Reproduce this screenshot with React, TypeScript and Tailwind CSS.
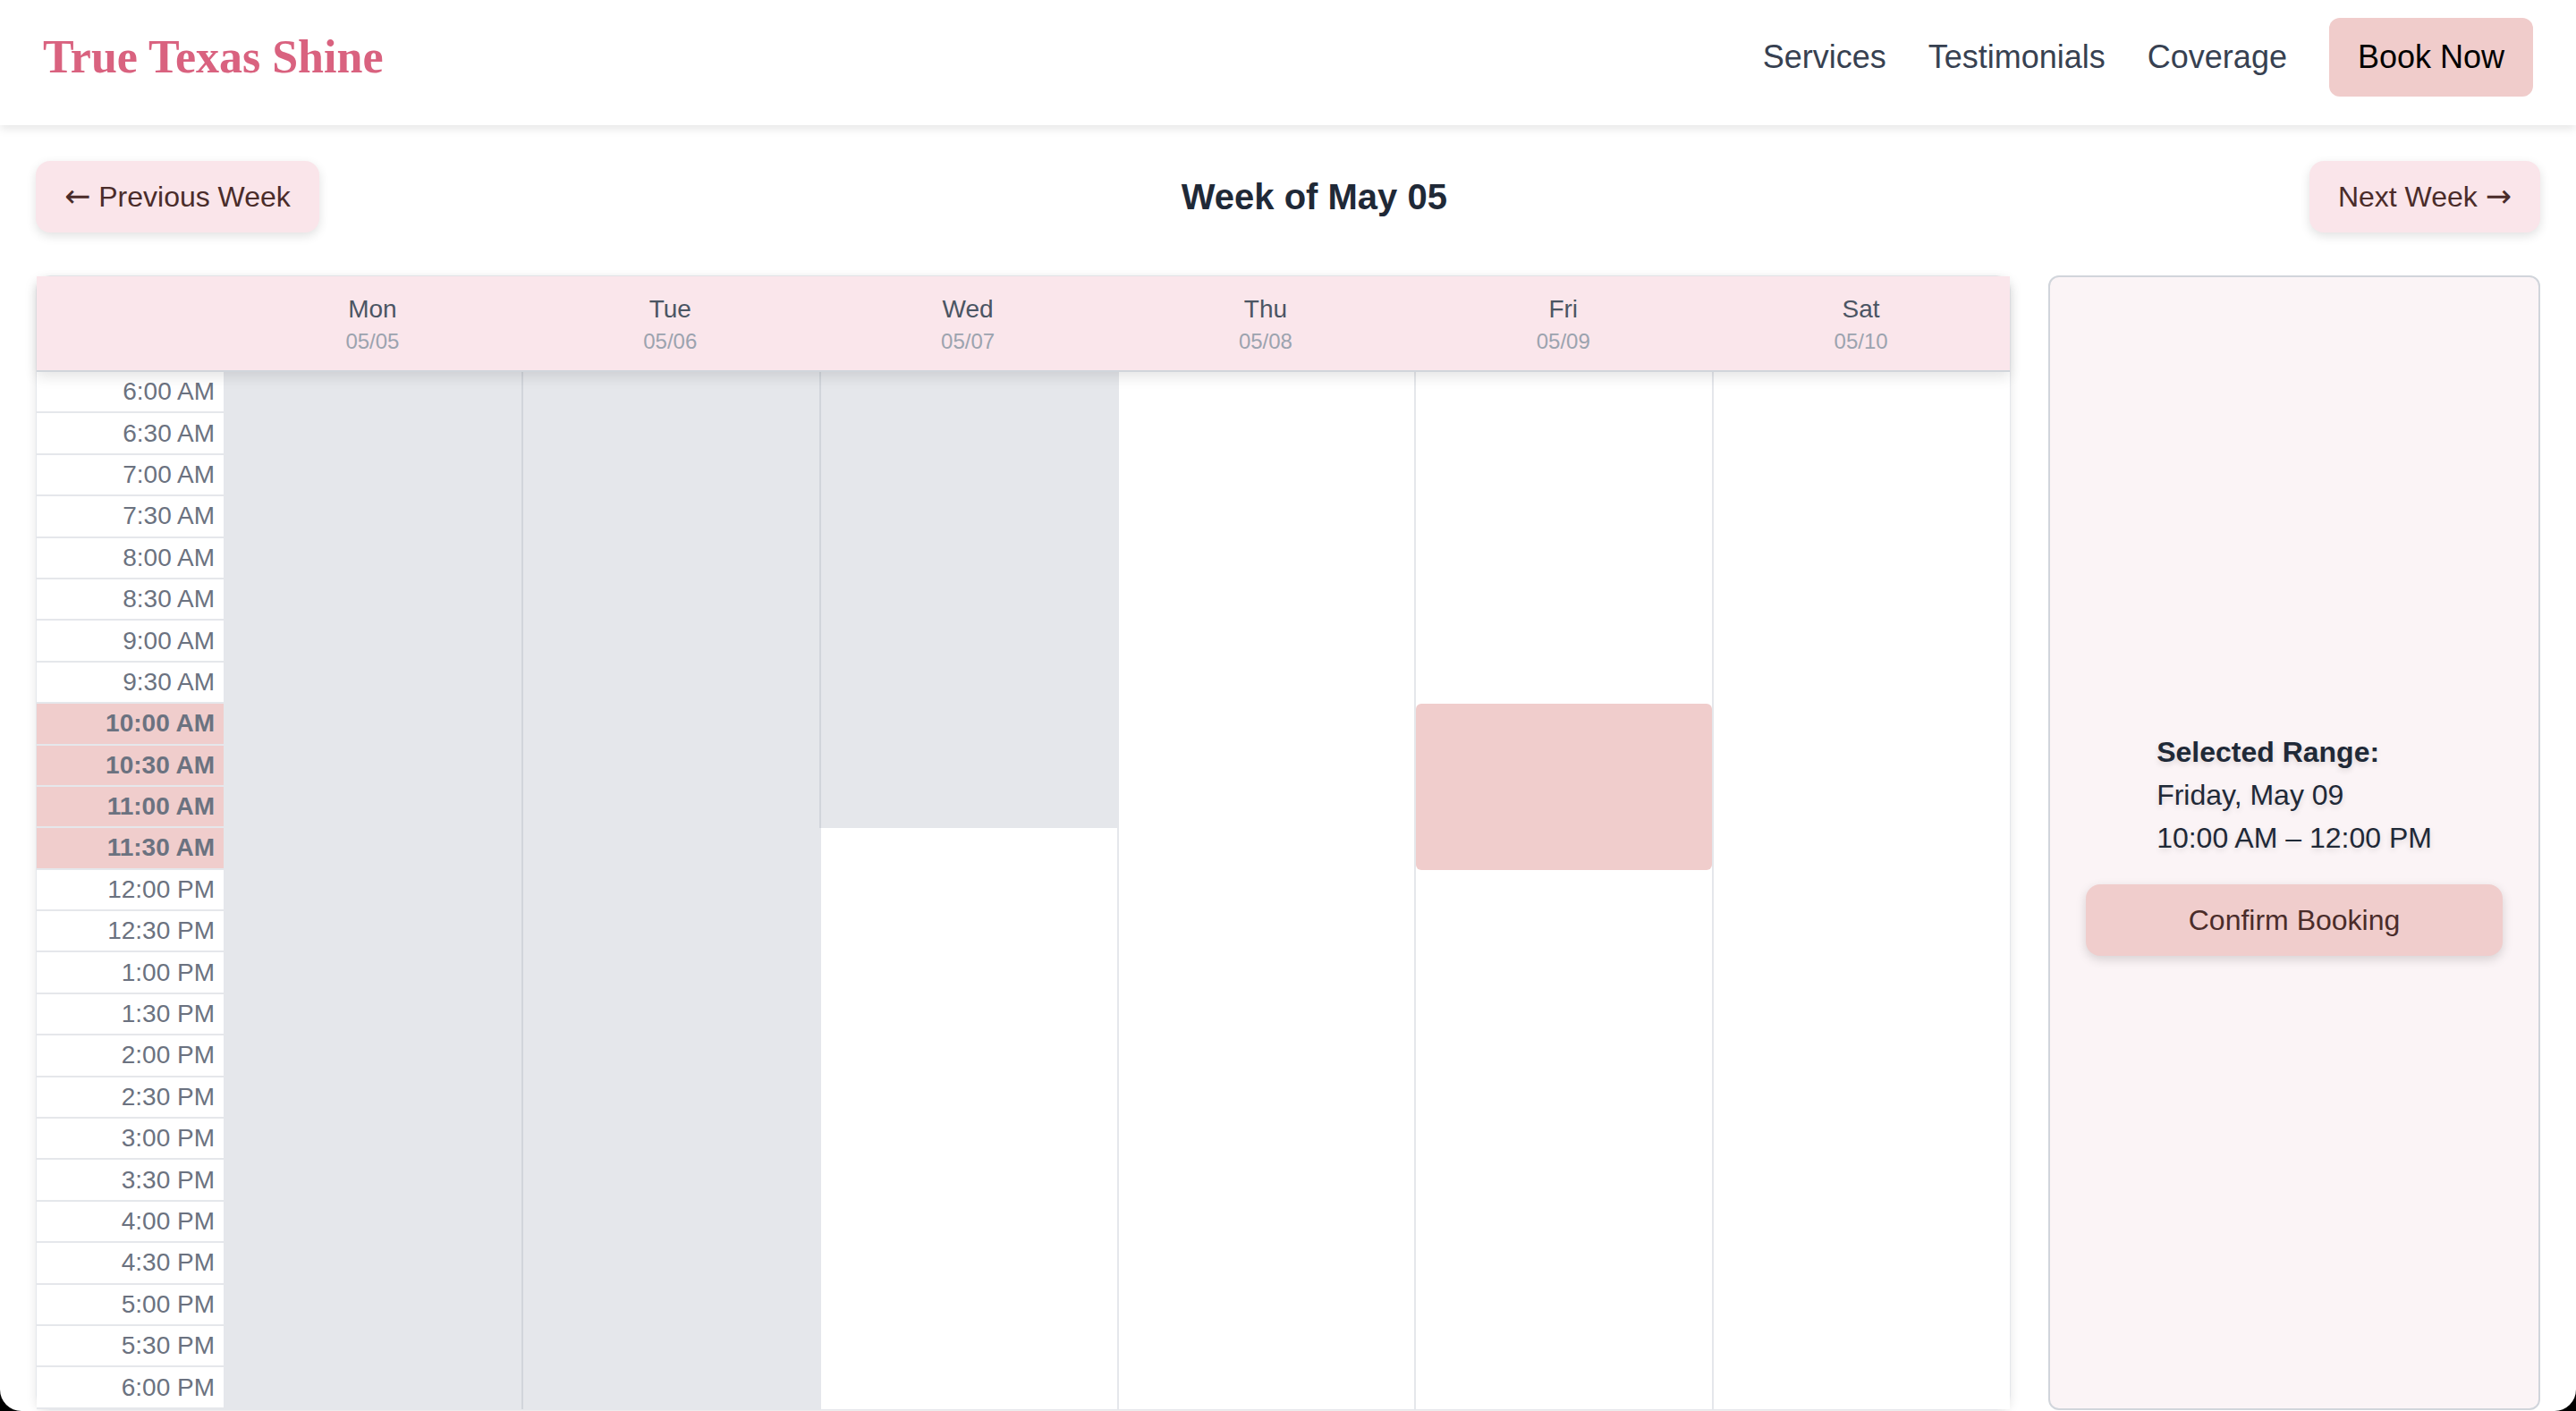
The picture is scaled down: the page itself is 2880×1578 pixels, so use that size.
import React from 'react';

const ROW_H = 46.4;

const times = [
  '6:00 AM', '6:30 AM', '7:00 AM', '7:30 AM', '8:00 AM', '8:30 AM',
  '9:00 AM', '9:30 AM', '10:00 AM', '10:30 AM', '11:00 AM', '11:30 AM',
  '12:00 PM', '12:30 PM', '1:00 PM', '1:30 PM', '2:00 PM', '2:30 PM',
  '3:00 PM', '3:30 PM', '4:00 PM', '4:30 PM', '5:00 PM', '5:30 PM', '6:00 PM',
];

const selectedRows = [8, 9, 10, 11];

type Kind = 'blocked' | 'free' | 'selected';

interface Day {
  name: string;
  date: string;
  segments: { rows: number; kind: Kind }[];
}

const days: Day[] = [
  { name: 'Mon', date: '05/05', segments: [{ rows: 25, kind: 'blocked' }] },
  { name: 'Tue', date: '05/06', segments: [{ rows: 25, kind: 'blocked' }] },
  {
    name: 'Wed',
    date: '05/07',
    segments: [
      { rows: 11, kind: 'blocked' },
      { rows: 14, kind: 'free' },
    ],
  },
  { name: 'Thu', date: '05/08', segments: [{ rows: 25, kind: 'free' }] },
  {
    name: 'Fri',
    date: '05/09',
    segments: [
      { rows: 8, kind: 'free' },
      { rows: 4, kind: 'selected' },
      { rows: 13, kind: 'free' },
    ],
  },
  { name: 'Sat', date: '05/10', segments: [{ rows: 25, kind: 'free' }] },
];

const Header: React.FC = () => (
  <header className="relative z-20 flex h-[140px] items-start bg-white px-[48px] pt-[20px] shadow-[0_4px_10px_rgba(0,0,0,0.1)]">
    <div className="flex h-[88px] w-full items-center justify-between">
      <a className="font-['Liberation_Serif',serif] text-[52px] font-bold text-[#d9627f]">
        True Texas Shine
      </a>
      <nav className="flex items-center gap-[47px] text-[36px] text-[#374151]">
        <a>Services</a>
        <a>Testimonials</a>
        <a>Coverage</a>
        <button className="rounded-[12px] bg-[#f0cccb] px-[32px] py-[16px] leading-[56px] text-black">
          Book Now
        </button>
      </nav>
    </div>
  </header>
);

const Arrow: React.FC<{ children: React.ReactNode }> = ({ children }) => (
  <span className="font-['DejaVu_Sans',sans-serif] text-[35px] leading-none">{children}</span>
);

const WeekButton: React.FC<{ children: React.ReactNode }> = ({ children }) => (
  <button className="rounded-[16px] bg-[#fae5ea] px-[32px] py-[16px] text-[32px] leading-[48px] text-[#4a2c2a] shadow-[0_4px_12px_rgba(0,0,0,0.12)]">
    {children}
  </button>
);

const DayColumn: React.FC<{ day: Day; first: boolean }> = ({ day, first }) => (
  <div className="flex flex-col">
    {day.segments.map((seg, i) => {
      const height = { height: seg.rows * ROW_H };
      if (seg.kind === 'blocked') {
        return (
          <div
            key={i}
            style={height}
            className={first ? 'bg-[#e5e7eb]' : 'border-l-2 border-[#d1d5db] bg-[#e5e7eb]'}
          />
        );
      }
      if (seg.kind === 'selected') {
        return (
          <div key={i} style={height} className="border-l-2 border-[#e5e7eb] bg-white">
            <div className="h-full rounded-[6px] bg-[#f0cdcc]" />
          </div>
        );
      }
      return <div key={i} style={height} className="border-l-2 border-[#e5e7eb] bg-white" />;
    })}
  </div>
);

const Calendar: React.FC = () => (
  <div className="flex min-w-0 flex-1 flex-col rounded-[16px] border border-[#e5e7eb] bg-white shadow-[0_4px_12px_rgba(0,0,0,0.1)]">
    <div className="relative z-10 grid h-[107px] grid-cols-[209px_repeat(6,1fr)] border-b-2 border-[#d1d5db] bg-[#fae6eb] shadow-[0_6px_14px_rgba(0,0,0,0.1)]">
      <div />
      {days.map((d) => (
        <div key={d.name} className="flex flex-col items-center justify-center">
          <span className="text-[28px] leading-[40px] text-[#4b5563]">{d.name}</span>
          <span className="text-[24px] leading-[32px] text-[#9ca3af]">{d.date}</span>
        </div>
      ))}
    </div>
    <div className="grid grid-cols-[209px_repeat(6,1fr)]">
      <div className="flex flex-col bg-[#e5e7eb]">
        {times.map((t, i) => {
          const sel = selectedRows.includes(i);
          return (
            <div
              key={t}
              style={{ height: ROW_H }}
              className={
                sel
                  ? 'flex items-center justify-end border-b-2 border-[#e5e7eb] bg-[#f0cdcc] pr-[10px] text-[28px] font-bold text-[#6b7280]'
                  : 'flex items-center justify-end border-b-2 border-[#e5e7eb] bg-white pr-[10px] text-[28px] text-[#6b7280]'
              }
            >
              {t}
            </div>
          );
        })}
      </div>
      {days.map((d, i) => (
        <DayColumn key={d.name} day={d} first={i === 0} />
      ))}
    </div>
  </div>
);

const SidePanel: React.FC = () => (
  <aside className="flex w-[550px] shrink-0 flex-col justify-center rounded-[12px] border-2 border-[#d1d5db] bg-[#fbf4f6] p-[40px]">
    <div className="self-center text-[32px] leading-[48px] text-[#1f2937] [text-shadow:0_3px_6px_rgba(0,0,0,0.12)]">
      <p className="font-bold">Selected Range:</p>
      <p>Friday, May 09</p>
      <p>10:00 AM – 12:00 PM</p>
    </div>
    <button className="mt-[28px] h-[80px] w-full rounded-[16px] bg-[#f0cdcc] text-[32px] text-[#4a2c2a] shadow-[0_4px_12px_rgba(0,0,0,0.15)]">
      Confirm Booking
    </button>
  </aside>
);

export default function App() {
  return (
    <div className="h-[1578px] w-full overflow-hidden bg-black font-['Liberation_Sans',Arial,sans-serif]">
      <div className="h-full overflow-hidden rounded-b-[24px] bg-white">
        <Header />
        <main className="p-[40px]">
          <div className="mb-[48px] flex items-center justify-between">
            <WeekButton>
              <Arrow>←</Arrow> Previous Week
            </WeekButton>
            <h2 className="text-[40px] font-bold text-[#1f2937]">Week of May 05</h2>
            <WeekButton>
              Next Week <Arrow>→</Arrow>
            </WeekButton>
          </div>
          <div className="flex items-stretch gap-[42px]">
            <Calendar />
            <SidePanel />
          </div>
        </main>
      </div>
    </div>
  );
}
